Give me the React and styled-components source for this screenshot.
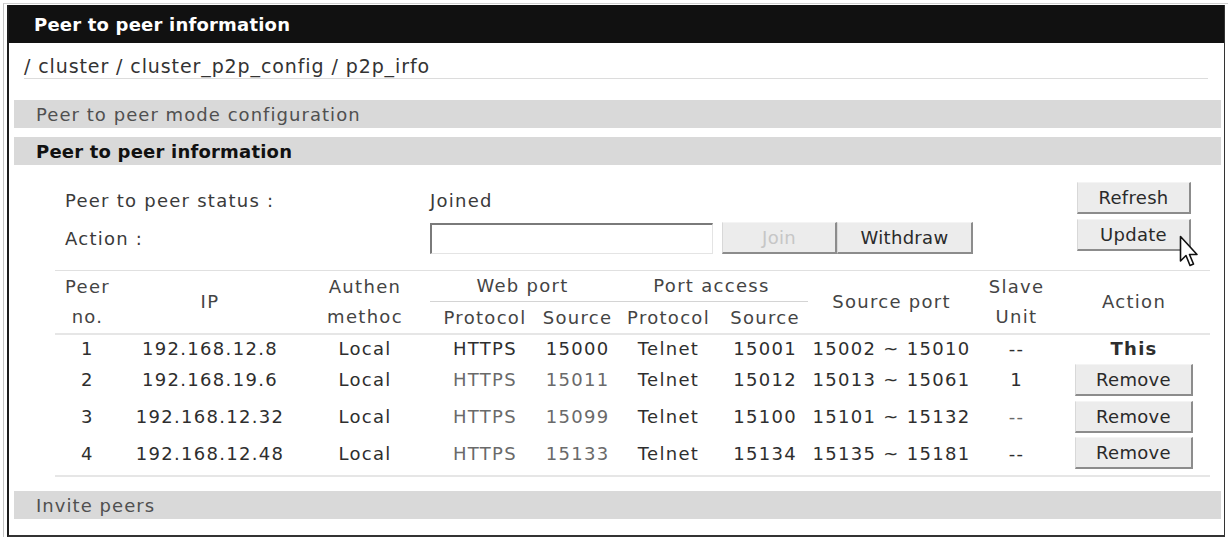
import React from 'react'
import styled, { createGlobalStyle } from 'styled-components'

const GlobalStyle = createGlobalStyle`
  body {
    margin: 0;
    background: #fff;
    font-family: "DejaVu Sans", Verdana, sans-serif;
    color: #333;
  }
`

const Outer = styled.div`
  margin: 3px 0 0 3px;
  border-left: 1px solid #c4c4c4;
  border-top: 1px solid #d0d0d0;
  padding: 1px 0 0 3px;
`

const Frame = styled.div`
  box-sizing: border-box;
  width: 1218px;
  border-left: 2px solid #1c1c1c;
  border-right: 1px solid #333;
  border-bottom: 2px solid #333;
  padding-bottom: 16px;
`

const TitleBar = styled.div`
  height: 38px;
  background: #111;
  color: #fff;
  display: flex;
  align-items: center;
  padding-left: 25px;
  font-size: 18px;
  font-weight: bold;
  letter-spacing: 0.2px;
`

const Crumbs = styled.div`
  margin: 0 16px 0 15px;
  padding-top: 11px;
  line-height: 24px;
  border-bottom: 1px solid #dcdcdc;
  font-size: 19px;
  letter-spacing: 0.9px;
  color: #333;
`

const SectionBar = styled.div`
  margin: ${p => p.$top}px 3px 0 5px;
  height: 28px;
  background: #d9d9d9;
  display: flex;
  align-items: center;
  padding-left: 22px;
  font-size: 18px;
  letter-spacing: ${p => (p.$bold ? '0.2px' : '1.05px')};
  font-weight: ${p => (p.$bold ? 'bold' : 'normal')};
  color: ${p => (p.$bold ? '#111' : '#505050')};
`

const Controls = styled.div`
  display: flex;
  justify-content: space-between;
  padding: 17px 33px 0 56px;
`

const FieldGrid = styled.div`
  display: grid;
  grid-template-columns: 365px auto;
  grid-template-rows: 36px 32px;
  row-gap: 4px;
  align-items: center;
  font-size: 18px;
  letter-spacing: 1.25px;
  color: #3a3a3a;
`

const ActionRow = styled.div`
  display: flex;
  align-items: center;
`

const TextBox = styled.div`
  box-sizing: border-box;
  width: 283px;
  height: 31px;
  margin-right: 9px;
  background: #fff;
  border-top: 2px solid #7a7a7a;
  border-left: 2px solid #7a7a7a;
  border-right: 1px solid #e4e4e4;
  border-bottom: 1px solid #e4e4e4;
`

const Button = styled.button`
  box-sizing: border-box;
  width: ${p => p.$w}px;
  height: 32px;
  padding: 0;
  background: #ececec;
  border-top: 1px solid #f4f4f4;
  border-left: 1px solid #d8d8d8;
  border-right: 2px solid #8c8c8c;
  border-bottom: 2px solid #8c8c8c;
  border-radius: 0;
  font-family: "DejaVu Sans", Verdana, sans-serif;
  font-size: 18px;
  letter-spacing: 0.3px;
  color: ${p => (p.disabled ? '#c6c6c6' : '#2a2a2a')};
`

const SideButtons = styled.div`
  display: flex;
  flex-direction: column;
  gap: 5px;
  position: relative;
`

const Cursor = styled.svg`
  position: absolute;
  left: 102px;
  top: 53px;
`

const Table = styled.table`
  margin: 16px 14px 0 46px;
  width: 1155px;
  border-collapse: collapse;
  table-layout: fixed;
  border-top: 1px solid #e0e0e0;
  border-bottom: 2px solid #e6e6e6;
  font-size: 18px;
  letter-spacing: 1.3px;
`

const Th = styled.th`
  font-weight: normal;
  color: #444;
  text-align: center;
  line-height: 30px;
  padding: 0;
  border-bottom: ${p => (p.$group ? '1px solid #d4d4d4' : 'none')};
`

const HeadRow = styled.tr`
  &:last-child th {
    padding-top: 1px;
  }
`

const BodyRow = styled.tr`
  height: ${p => p.$h}px;
  &:first-child td {
    border-top: 2px solid #e6e6e6;
  }
  &:last-child td {
    padding-bottom: 4px;
  }
`

const Td = styled.td`
  text-align: center;
  padding: 0;
  color: ${p => (p.$faint ? '#6a6a6a' : '#2e2e2e')};
  font-weight: ${p => (p.$bold ? 'bold' : 'normal')};
`

const peers = [
  { no: 1, ip: '192.168.12.8', web: '15000', port: '15001', range: '15002 ~ 15010', slave: '--', self: true },
  { no: 2, ip: '192.168.19.6', web: '15011', port: '15012', range: '15013 ~ 15061', slave: '1' },
  { no: 3, ip: '192.168.12.32', web: '15099', port: '15100', range: '15101 ~ 15132', slave: '--' },
  { no: 4, ip: '192.168.12.48', web: '15133', port: '15134', range: '15135 ~ 15181', slave: '--' },
]

const widths = [65, 180, 130, 110, 75, 107, 86, 167, 83, 152]

const rowHeight = (p, i) => (p.self ? 27 : i === peers.length - 1 ? 41 : 37)

export default function App() {
  return (
    <>
      <GlobalStyle />
      <Outer>
        <Frame>
          <TitleBar>Peer to peer information</TitleBar>
          <Crumbs>/ cluster / cluster_p2p_config / p2p_irfo</Crumbs>
          <SectionBar $top={21}>Peer to peer mode configuration</SectionBar>
          <SectionBar $top={9} $bold>Peer to peer information</SectionBar>

          <Controls>
            <FieldGrid>
              <span>Peer to peer status :</span>
              <span>Joined</span>
              <span>Action :</span>
              <ActionRow>
                <TextBox />
                <Button $w={115} disabled>Join</Button>
                <Button $w={136}>Withdraw</Button>
              </ActionRow>
            </FieldGrid>
            <SideButtons>
              <Button $w={114}>Refresh</Button>
              <Button $w={114}>Update</Button>
              <Cursor width="21" height="34" viewBox="0 0 21 34">
                <path
                  d="M1.5 1.5 L1.5 26 L7 20.5 L11 30.5 L14.5 29 L10.5 19.5 L18 19.5 Z"
                  fill="#fff"
                  stroke="#111"
                  strokeWidth="1.6"
                  strokeLinejoin="round"
                />
              </Cursor>
            </SideButtons>
          </Controls>

          <Table>
            <colgroup>
              {widths.map((w, i) => <col key={i} style={{ width: w }} />)}
            </colgroup>
            <thead>
              <HeadRow>
                <Th rowSpan={2}>Peer<br />no.</Th>
                <Th rowSpan={2}>IP</Th>
                <Th rowSpan={2}>Authen<br />methoc</Th>
                <Th colSpan={2} $group>Web port</Th>
                <Th colSpan={2} $group>Port access</Th>
                <Th rowSpan={2}>Source port</Th>
                <Th rowSpan={2}>Slave<br />Unit</Th>
                <Th rowSpan={2}>Action</Th>
              </HeadRow>
              <HeadRow>
                <Th>Protocol</Th>
                <Th>Source</Th>
                <Th>Protocol</Th>
                <Th>Source</Th>
              </HeadRow>
            </thead>
            <tbody>
              {peers.map((p, i) => (
                <BodyRow key={p.no} $h={rowHeight(p, i)}>
                  <Td>{p.no}</Td>
                  <Td>{p.ip}</Td>
                  <Td>Local</Td>
                  <Td $faint={!p.self}>HTTPS</Td>
                  <Td $faint={!p.self}>{p.web}</Td>
                  <Td>Telnet</Td>
                  <Td>{p.port}</Td>
                  <Td>{p.range}</Td>
                  <Td $faint={p.no === 3}>{p.slave}</Td>
                  <Td $bold={p.self}>
                    {p.self ? 'This' : <Button $w={118}>Remove</Button>}
                  </Td>
                </BodyRow>
              ))}
            </tbody>
          </Table>

          <SectionBar $top={14}>Invite peers</SectionBar>
        </Frame>
      </Outer>
    </>
  )
}
